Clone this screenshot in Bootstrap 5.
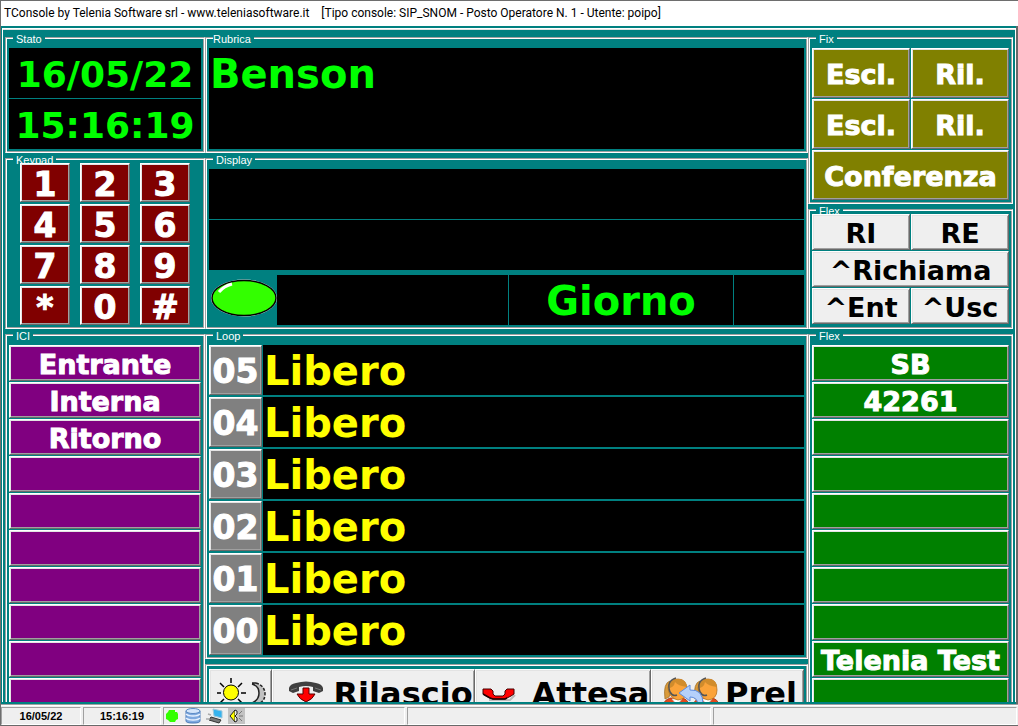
<!DOCTYPE html>
<html lang="it">
<head>
<meta charset="utf-8">
<meta name="viewport" content="width=device-width, initial-scale=1">
<title>TConsole by Telenia Software srl</title>
<link href="https://cdn.jsdelivr.net/npm/bootstrap@5.3.0/dist/css/bootstrap.min.css" rel="stylesheet">
<style>
  :root { --teal: #008080; --lime: #00ff00; --face: #efefef; --edge: #a0a0a0; --dark: #696969; }
  body { font-family: "DejaVu Sans", Verdana, sans-serif; background: var(--teal); border-left: 1px solid #6e6e6e; line-height: 1; }
  .title-bar { height: 26px; background: #fff; color: #000; border-top: 1px solid #6e6e6e; font: 12px/25px Roboto, "Segoe UI", sans-serif; padding-left: 3px; white-space: pre; }
  .workspace { background: var(--teal); padding: 2px 0 2px 1px; border-right: 2px solid var(--dark); }
  .deck { border: solid #fff; border-width: 1px 1px 0; box-shadow: inset 0 1px #e3e3e3; padding: 8px 2px 0; }
  .side-l { width: 200px; }
  .side-r { width: 205px; }
  .stack { gap: 5px; }

  /* etched group box with its caption over the top line */
  .group { position: relative; isolation: isolate; padding: 10px 3px 3px; border: 1px solid; border-color: var(--edge) #fff #fff var(--edge); box-shadow: inset 1px 1px #fff, inset -1px -1px var(--edge); }
  .group.tight { padding-top: 4px; }
  .group-title { position: absolute; z-index: -1; top: -5px; left: 7px; margin: 0; padding: 0 3px; background: var(--teal); color: #fff; font: 11px/13px "Liberation Sans", Arial, sans-serif; }
  .group-title.flush { padding-left: 0; }

  .screen { background: #000; color: var(--lime); font-weight: 700; font-size: 40px; height: 50px; line-height: 52px; white-space: nowrap; }
  .clock { font-size: 36px; line-height: 54px; text-align: center; }
  .book { height: 101px; padding-left: 1px; }
  .g1 { gap: 1px; }
  .g2 { gap: 2px; }
  .lines { padding-bottom: 5px; }

  .key { border: 1px solid; border-color: #fff var(--dark) var(--dark) #fff; border-radius: 0; box-shadow: inset 1px 1px #e3e3e3, inset -1px -1px var(--edge); padding: 3px 0 0; font-weight: 700; font-size: 27px; height: 36px; line-height: 1; color: #fff; -webkit-text-stroke: 1px #fff; overflow: hidden; white-space: nowrap; display: block; width: 100%; }
  .key-face { background: var(--face); color: #000; -webkit-text-stroke: 0; }
  .key-tall { height: 50px; }
  .olive { background: #808000; }
  .purple { background: #800080; }
  .green { background: #008000; }
  .grey { background: #808080; }
  .maroon { background: #800000; }
  .pair { display: grid; grid-template-columns: 1fr 1fr; gap: 1px; }
  .wide { grid-column: span 2; }
  .pad { display: grid; grid-template-columns: repeat(3, 50px); gap: 2px 10px; justify-content: center; }
  .pad .key { height: 39px; font-size: 33px; }
  .line-no { width: 53px; height: 50px; font-size: 33px; }
  .line-text { color: #ff0; padding-left: 1px; }
  .led { width: 68px; padding: 4px 0 0 2px; }
  .day { flex: 0 1 224px; }
  .spare { flex: 0 0 70px; }

  .tool { height: 50px; font-size: 32px; display: flex; align-items: center; justify-content: flex-end; padding: 0 1px 0 0; }
  .tool-sun { flex: 0 0 63px; padding: 0; justify-content: center; }
  .tool-a { flex: 203 1 203px; }
  .tool-b { flex: 177 1 177px; }
  .tool-c { flex: 153 1 153px; padding-right: 6px; }

  .status { height: 22px; background: var(--face); border-top: 1px solid var(--edge); border-bottom: 1px solid var(--dark); box-shadow: inset 0 1px #fff; padding: 2px 1px 0 0; gap: 2px; font: bold 11px/16px "Liberation Sans", Arial, sans-serif; color: #000; }
  .pane { border: 1px solid; border-color: var(--edge) #fff #fff var(--edge); text-align: center; }
  .pane-date { width: 80px; }
  .pane-time { width: 78px; }
  .pane-icons { flex: 0 0 242px; gap: 4px; }
  .pane-icons svg { flex: none; }
</style>
</head>
<body class="d-flex flex-column vh-100 overflow-hidden">
  <header class="title-bar flex-shrink-0 overflow-hidden">TConsole by Telenia Software srl - www.teleniasoftware.it    [Tipo console: SIP_SNOM - Posto Operatore N. 1 - Utente: poipo]</header>

  <main class="workspace d-flex flex-fill overflow-hidden">
    <div class="deck d-flex flex-fill overflow-hidden">

      <div class="side-l stack d-flex flex-column flex-shrink-0">
        <section class="group d-flex flex-column g1">
          <h2 class="group-title">Stato</h2>
          <div class="screen clock">16/05/22</div>
          <div class="screen clock">15:16:19</div>
        </section>
        <section class="group tight">
          <h2 class="group-title">Keypad</h2>
          <div class="pad">
            <button class="key maroon">1</button><button class="key maroon">2</button><button class="key maroon">3</button>
            <button class="key maroon">4</button><button class="key maroon">5</button><button class="key maroon">6</button>
            <button class="key maroon">7</button><button class="key maroon">8</button><button class="key maroon">9</button>
            <button class="key maroon">*</button><button class="key maroon">0</button><button class="key maroon">#</button>
          </div>
        </section>
        <section class="group d-flex flex-column g1">
          <h2 class="group-title">ICI</h2>
          <button class="key purple flex-shrink-0">Entrante</button>
          <button class="key purple flex-shrink-0">Interna</button>
          <button class="key purple flex-shrink-0">Ritorno</button>
          <button class="key purple flex-shrink-0" aria-label="ICI 4"></button>
          <button class="key purple flex-shrink-0" aria-label="ICI 5"></button>
          <button class="key purple flex-shrink-0" aria-label="ICI 6"></button>
          <button class="key purple flex-shrink-0" aria-label="ICI 7"></button>
          <button class="key purple flex-shrink-0" aria-label="ICI 8"></button>
          <button class="key purple flex-shrink-0" aria-label="ICI 9"></button>
          <button class="key purple flex-shrink-0" aria-label="ICI 10"></button>
        </section>
      </div>

      <div class="stack d-flex flex-column flex-fill">
        <section class="group">
          <h2 class="group-title flush">Rubrica</h2>
          <div class="screen book">Benson</div>
        </section>
        <section class="group">
          <h2 class="group-title">Display</h2>
          <div class="lines d-flex flex-column g1">
            <div class="screen"></div>
            <div class="screen"></div>
          </div>
          <div class="d-flex">
            <div class="led flex-shrink-0">
              <svg class="d-block" width="66" height="38" viewBox="0 0 66 38" role="img" aria-label="Linea attiva">
                <ellipse cx="33" cy="19" rx="33" ry="18.500" fill="#fff"/>
                <ellipse cx="33" cy="19" rx="32" ry="17.500" fill="#3f0" stroke="#000" stroke-width="1.500"/>
                <path d="M8 13Q13 7 21 5" fill="none" stroke="#fff" stroke-width="3"/>
              </svg>
            </div>
            <div class="d-flex flex-fill g1">
              <div class="screen flex-fill"></div>
              <div class="screen day text-center">Giorno</div>
              <div class="screen spare"></div>
            </div>
          </div>
        </section>
        <section class="group d-flex flex-column g2">
          <h2 class="group-title">Loop</h2>
          <div class="d-flex g1"><button class="key grey line-no">05</button><div class="screen line-text flex-fill">Libero</div></div>
          <div class="d-flex g1"><button class="key grey line-no">04</button><div class="screen line-text flex-fill">Libero</div></div>
          <div class="d-flex g1"><button class="key grey line-no">03</button><div class="screen line-text flex-fill">Libero</div></div>
          <div class="d-flex g1"><button class="key grey line-no">02</button><div class="screen line-text flex-fill">Libero</div></div>
          <div class="d-flex g1"><button class="key grey line-no">01</button><div class="screen line-text flex-fill">Libero</div></div>
          <div class="d-flex g1"><button class="key grey line-no">00</button><div class="screen line-text flex-fill">Libero</div></div>
        </section>
        <section class="group tight d-flex">
          <button class="key key-face tool tool-sun" aria-label="Giorno / Notte">
            <svg width="56" height="40" viewBox="0 0 56 40">
              <g stroke="#000" stroke-width="1.500">
                <path d="M18 4v5M18 28v5M4 19h4M28 19h5M7 9l4 4M29 9l-4 4M7 29l4-4M29 29l-4-4"/>
                <circle cx="18" cy="18.500" r="7.500" fill="#ff0" stroke-width="1"/>
              </g>
              <path d="M40 9q11 0 12 11q-1 8-8 10h-5v-2q7-2 7-9t-6-8z" fill="#c0c0c0"/>
              <path d="M39 9h4M39 10q7 2 7 9t-7 10" fill="none" stroke="#222" stroke-width="1.500"/>
              <path d="M43 9q9 3 9 11t-8 10h-5" fill="none" stroke="#222" stroke-width="1.500" stroke-dasharray="3 1.500"/>
            </svg>
          </button>
          <button class="key key-face tool tool-a">
            <svg class="me-2" width="38" height="32" viewBox="0 0 38 32">
              <path d="M2 10Q3 6 9 5Q19 2 29 5Q35 6 36 10v3l-4 2-6-2V9q-7-2-14 0v4l-6 2-4-2z" fill="#404040"/>
              <path d="M4 12l6-2M28 10l6 2" stroke="#777"/>
              <path d="M16 10h6v6h6q-2 5-9 8q-7-3-9-8h6z" fill="#f00" stroke="#500"/>
            </svg>
            <span>Rilascio</span>
          </button>
          <button class="key key-face tool tool-b">
            <svg class="me-3" width="34" height="20" viewBox="0 0 34 20">
              <path d="M7 16h21l5-5" fill="none" stroke="#bbb" stroke-width="2"/>
              <path d="M1 5h8l2 2v3l2 2h8l2-2V7l2-2h7v5l-3 2-4 2-2 1H11l-3-1-4-2-3-2z" fill="#f00" stroke="#400"/>
              <path d="M1 10l7 4 3 1h12l2-1" fill="none" stroke="#200" stroke-width="1.500"/>
            </svg>
            <span>Attesa</span>
          </button>
          <button class="key key-face tool tool-c">
            <svg class="me-1" width="60" height="38" viewBox="0 0 60 38">
              <g id="agent" stroke-width=".8">
                <path d="M1 38q-1-12 8-15h13q8 3 7 15z" fill="#e2481a" stroke="#a03a14"/>
                <path d="M11 24l5 6 5-6z" fill="#fff" stroke="#ccc"/>
                <path d="M9 6Q2 8 4 24l4-2 3-8z" fill="#d99a3a" stroke="#a3722a"/>
                <path d="M7 13Q8 4 17 4t9 11q0 9-9 10Q8 23 7 13z" fill="#fba33a" stroke="#b87420"/>
                <path d="M7 13Q8 3 17 4q8 0 9 8q-9-1-12-5q-1 6-7 6z" fill="#d18c2c"/>
                <path d="M9 17Q5 6 15 3M9 17q3 5 7 3" fill="none" stroke="#555" stroke-width="1.500"/>
              </g>
              <use href="#agent" x="30"/>
              <path d="M18 18l11-8v5q13-1 13 14h-5q-1-7-8-7v4z" fill="#b5d0fa" stroke="#5c8cdf"/>
            </svg>
            <span>Prel</span>
          </button>
        </section>
      </div>

      <div class="side-r stack d-flex flex-column flex-shrink-0">
        <section class="group">
          <h2 class="group-title">Fix</h2>
          <div class="pair">
            <button class="key key-tall olive">Escl.</button><button class="key key-tall olive">Ril.</button>
            <button class="key key-tall olive">Escl.</button><button class="key key-tall olive">Ril.</button>
            <button class="key key-tall olive wide">Conferenza</button>
          </div>
        </section>
        <section class="group tight pb-1">
          <h2 class="group-title">Flex</h2>
          <div class="pair">
            <button class="key key-face">RI</button><button class="key key-face">RE</button>
            <button class="key key-face wide">^Richiama</button>
            <button class="key key-face">^Ent</button><button class="key key-face">^Usc</button>
          </div>
        </section>
        <section class="group d-flex flex-column g1">
          <h2 class="group-title">Flex</h2>
          <button class="key green flex-shrink-0">SB</button>
          <button class="key green flex-shrink-0">42261</button>
          <button class="key green flex-shrink-0" aria-label="Flex 3"></button>
          <button class="key green flex-shrink-0" aria-label="Flex 4"></button>
          <button class="key green flex-shrink-0" aria-label="Flex 5"></button>
          <button class="key green flex-shrink-0" aria-label="Flex 6"></button>
          <button class="key green flex-shrink-0" aria-label="Flex 7"></button>
          <button class="key green flex-shrink-0" aria-label="Flex 8"></button>
          <button class="key green flex-shrink-0">Telenia Test</button>
          <button class="key green flex-shrink-0" aria-label="Flex 10"></button>
        </section>
      </div>
    </div>
  </main>

  <footer class="status d-flex flex-shrink-0">
    <div class="pane pane-date">16/05/22</div>
    <div class="pane pane-time">15:16:19</div>
    <div class="pane pane-icons d-flex align-items-center">
      <svg width="16" height="16" viewBox="0 0 16 16"><path d="M5 2h6v2h2l1 2v5l-2 1-1 2H6l-2-2-2-1V6l2-2z" fill="#3f0"/></svg>
      <svg width="18" height="16" viewBox="0 0 18 16">
        <path d="M2 3v10q0 2 7 2t7-2V3z" fill="#7fa9df" stroke="#4e7dbb"/>
        <path d="M2 6q2 2 7 2t7-2M2 10q2 2 7 2t7-2" fill="none" stroke="#e7f1ff" stroke-width="1.500"/>
        <ellipse cx="9" cy="3" rx="7" ry="2.500" fill="#d5e6fb" stroke="#5c8ac5"/>
      </svg>
      <svg width="18" height="16" viewBox="0 0 18 16">
        <path d="M7 1l9 2v7l-8-2z" fill="#35b3ee" stroke="#9dc7dc"/>
        <path d="M5 9l10 3-2 3-10-3z" fill="#777" stroke="#333"/>
        <path d="M2 6l3 1M0 11h4" stroke="#aaa" stroke-width="1.500"/>
      </svg>
      <svg width="17" height="16" viewBox="0 0 17 16">
        <path fill="#c3c3c3" d="M0 0h17v16H0z"/>
        <path d="M2 8l5-6v12z" fill="#ff0" stroke="#222"/>
        <path d="M7 2l2 1v3L7 8l2 2v3l-2 1" fill="#eee" stroke="#222"/>
        <path d="M11 6l3-3M11 8h4M11 10l3 3" stroke="#777"/>
      </svg>
    </div>
    <div class="pane flex-fill"></div>
    <div class="pane flex-fill"></div>
  </footer>
<script src="https://cdn.jsdelivr.net/npm/bootstrap@5.3.0/dist/js/bootstrap.bundle.min.js"></script>
</body>
</html>
